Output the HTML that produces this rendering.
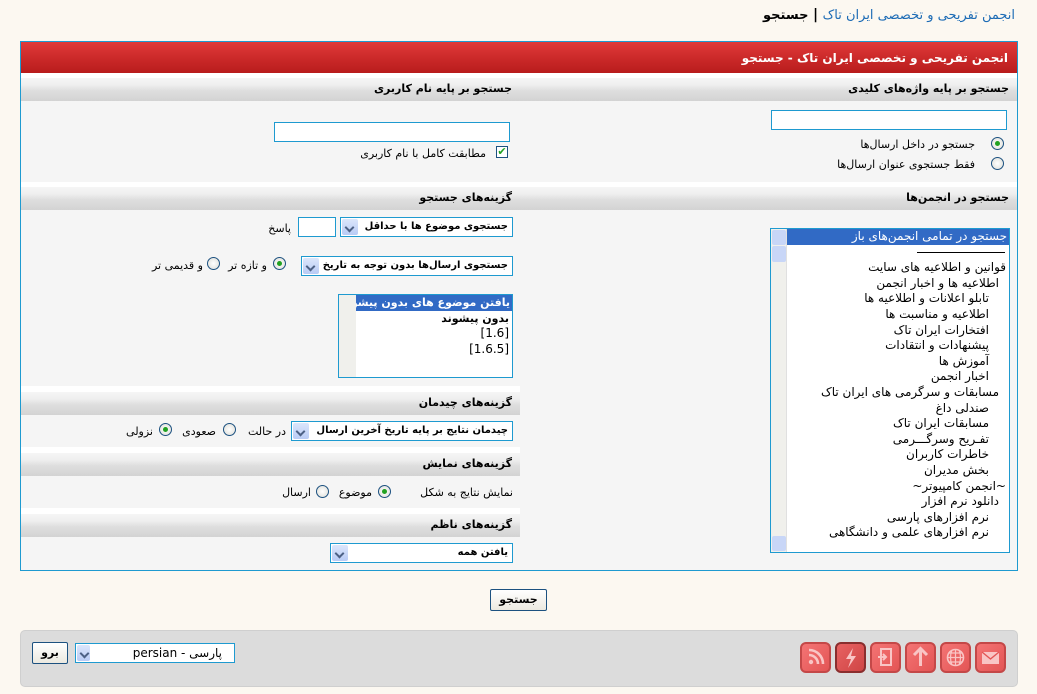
<!DOCTYPE html>
<html><head><meta charset="utf-8">
<style>
*{margin:0;padding:0;box-sizing:border-box}
body{width:1037px;height:694px;background:#fcf8f1;font-family:"DejaVu Sans",sans-serif;font-size:11px;color:#000;position:relative;overflow:hidden;direction:rtl}
.a{position:absolute}
.t{white-space:nowrap}
.hd{position:absolute;height:23px;background:linear-gradient(#f6f6f6 0%,#efefef 30%,#dedede 55%,#d3d3d3 100%);font-weight:bold;font-size:11px;line-height:21px;padding-right:8px}
.inp{position:absolute;background:#fff;border:1px solid #1e9ad0}
.sel{position:absolute;background:#fff;border:1px solid #1e9ad0;font-weight:bold;font-size:10px;line-height:18px;padding-right:4px;white-space:nowrap;overflow:hidden}
.dd{position:absolute;left:1px;top:1px;bottom:1px;width:16px;background:linear-gradient(#dbe6fb,#b9cbf5);border-radius:2px}
.dd:after{content:"";position:absolute;left:4px;top:5px;width:5px;height:5px;border-right:2px solid #4d6185;border-bottom:2px solid #4d6185;transform:rotate(45deg)}
.rad{position:absolute;width:13px;height:13px;border-radius:50%;border:1px solid #1c5180;background:radial-gradient(#fff,#dcdcd6)}
.rad.on:after{content:"";position:absolute;left:3px;top:3px;width:5px;height:5px;border-radius:50%;background:#21a121}
.ic{position:absolute;top:642px;width:31px;height:31px;border-radius:6px;background:linear-gradient(135deg,#f47474,#e35555);border:2px solid #c44848}
.lst div{height:15.6px;line-height:15.6px;white-space:nowrap;font-size:12px}
</style></head><body>

<div class="a t" style="right:22px;top:7px;font-size:13px;font-weight:bold"><span style="color:#1c6bb5;font-weight:normal">انجمن تفریحی و تخصصی ایران تاک</span> <span style="font-size:14px">|</span> جستجو</div>

<div class="a" style="left:20px;top:41px;width:998px;height:530px;border:1px solid #1e9ad0;background:#f5f5f5"></div>
<div class="a" style="left:21px;top:42px;width:996px;height:31px;background:linear-gradient(#e03a3a,#cc2a2a 50%,#b81c1c);color:#fff;font-weight:bold;font-size:12px;line-height:32px;padding-right:9px;text-align:right">انجمن تفریحی و تخصصی ایران تاک - جستجو</div>
<div class="a" style="left:21px;top:73px;width:996px;height:5px;background:#fff"></div>

<div class="hd" style="left:520px;top:78px;width:497px">جستجو بر پایه واژه‌های کلیدی</div>
<div class="hd" style="left:21px;top:78px;width:499px">جستجو بر پایه نام کاربری</div>

<div class="inp" style="left:771px;top:110px;width:236px;height:20px"></div>
<div class="rad on" style="left:991px;top:137px"></div>
<div class="a t" style="right:62px;top:138px">جستجو در داخل ارسال‌ها</div>
<div class="rad" style="left:991px;top:157px"></div>
<div class="a t" style="right:62px;top:158px">فقط جستجوی عنوان ارسال‌ها</div>

<div class="inp" style="left:274px;top:122px;width:236px;height:20px"></div>
<div class="a" style="left:496px;top:146px;width:12px;height:12px;border:1px solid #1c5180;background:#fff;color:#21a121;font-size:11px;line-height:10px;text-align:center;font-weight:bold">✔</div>
<div class="a t" style="right:551px;top:147px">مطابقت کامل با نام کاربری</div>

<div class="a" style="left:21px;top:182px;width:996px;height:5px;background:#fff"></div>
<div class="hd" style="left:520px;top:187px;width:497px">جستجو در انجمن‌ها</div>
<div class="hd" style="left:21px;top:187px;width:499px">گزینه‌های جستجو</div>

<div class="a lst" style="left:770px;top:228px;width:240px;height:325px;border:1px solid #1e9ad0;background:#fff;overflow:hidden;padding-right:0;text-align:right">
<div style="background:#316ac5;color:#fff;padding-right:2px;margin-left:16px">جستجو در تمامی انجمن‌های باز</div>
<div style="padding-right:4px"><span style="display:inline-block;width:88px;border-top:1px solid #000;vertical-align:middle"></span></div>
<div style="padding-right:3px">قوانین و اطلاعیه های سایت</div>
<div style="padding-right:10px">اطلاعیه ها و اخبار انجمن</div>
<div style="padding-right:20px">تابلو اعلانات و اطلاعیه ها</div>
<div style="padding-right:20px">اطلاعیه و مناسبت ها</div>
<div style="padding-right:20px">افتخارات ایران تاک</div>
<div style="padding-right:20px">پیشنهادات و انتقادات</div>
<div style="padding-right:20px">آموزش ها</div>
<div style="padding-right:20px">اخبار انجمن</div>
<div style="padding-right:10px">مسابقات و سرگرمی های ایران تاک</div>
<div style="padding-right:20px">صندلی داغ</div>
<div style="padding-right:20px">مسابقات ایران تاک</div>
<div style="padding-right:20px">تفـریح وسرگـــرمی</div>
<div style="padding-right:20px">خاطرات کاربران</div>
<div style="padding-right:20px">بخش مدیران</div>
<div style="padding-right:3px">~انجمن کامپیوتر~</div>
<div style="padding-right:10px">دانلود نرم افزار</div>
<div style="padding-right:20px">نرم افزارهای پارسی</div>
<div style="padding-right:20px">نرم افزارهای علمی و دانشگاهی</div>
<div class="a" style="left:0;top:0;width:16px;height:323px;background:#f0f0ec;border-right:1px solid #e0e0e0"></div>
<div class="a" style="left:1px;top:1px;width:14px;height:15px;background:#c8d6f7;border-radius:2px"></div>
<div class="a" style="left:1px;top:17px;width:14px;height:16px;background:#c8d6f7;border-radius:2px"></div>
<div class="a" style="left:1px;bottom:1px;width:14px;height:15px;background:#c8d6f7;border-radius:2px"></div>
</div>

<div class="sel" style="left:340px;top:217px;width:173px;height:20px">جستجوی موضوع ها با حداقل<div class="dd"></div></div>
<div class="inp" style="left:298px;top:217px;width:38px;height:20px"></div>
<div class="a t" style="right:746px;top:222px">پاسخ</div>

<div class="sel" style="left:301px;top:256px;width:212px;height:20px">جستجوی ارسال‌ها بدون توجه به تاریخ<div class="dd"></div></div>
<div class="rad on" style="left:273px;top:257px"></div>
<div class="a t" style="right:770px;top:259px">و تازه تر</div>
<div class="rad" style="left:207px;top:257px"></div>
<div class="a t" style="right:834px;top:259px">و قدیمی تر</div>

<div class="a lst" style="left:338px;top:294px;width:175px;height:84px;border:1px solid #1e9ad0;background:#fff;overflow:hidden;text-align:right">
<div style="background:#316ac5;color:#fff;margin-left:17px;padding-right:2px;font-size:11px;font-weight:bold">یافتن موضوع های بدون پیشوند</div>
<div style="padding-right:3px;font-weight:bold;font-size:11px">بدون پیشوند</div>
<div style="padding-right:3px">[1.6]</div>
<div style="padding-right:3px">[1.6.5]</div>
<div class="a" style="left:0;top:0;width:17px;height:82px;background:#f0f0ec"></div>
</div>

<div class="a" style="left:21px;top:386px;width:499px;height:6px;background:#fff"></div>
<div class="hd" style="left:21px;top:392px;width:499px">گزینه‌های چیدمان</div>
<div class="sel" style="left:291px;top:421px;width:222px;height:20px">چیدمان نتایج بر پایه تاریخ آخرین ارسال<div class="dd"></div></div>
<div class="a t" style="right:751px;top:425px">در حالت</div>
<div class="rad" style="left:223px;top:423px"></div>
<div class="a t" style="right:821px;top:425px">صعودی</div>
<div class="rad on" style="left:159px;top:423px"></div>
<div class="a t" style="right:884px;top:425px">نزولی</div>

<div class="a" style="left:21px;top:447px;width:499px;height:6px;background:#fff"></div>
<div class="hd" style="left:21px;top:453px;width:499px">گزینه‌های نمایش</div>
<div class="a t" style="right:524px;top:486px">نمایش نتایج به شکل</div>
<div class="rad on" style="left:378px;top:485px"></div>
<div class="a t" style="right:665px;top:486px">موضوع</div>
<div class="rad" style="left:316px;top:485px"></div>
<div class="a t" style="right:726px;top:486px">ارسال</div>

<div class="a" style="left:21px;top:508px;width:499px;height:6px;background:#fff"></div>
<div class="hd" style="left:21px;top:514px;width:499px">گزینه‌های ناظم</div>
<div class="sel" style="left:330px;top:543px;width:183px;height:20px">یافتن همه<div class="dd"></div></div>

<div class="a" style="left:490px;top:589px;width:57px;height:22px;border:1px solid #1c5180;border-radius:2px;background:linear-gradient(#fff,#ece9e0);font-weight:bold;text-align:center;line-height:19px">جستجو</div>

<div class="a" style="left:20px;top:630px;width:998px;height:57px;background:#dcdcdc;border:1px solid #cfcfcf;border-radius:5px"></div>
<div class="a" style="left:32px;top:642px;width:36px;height:22px;border:1px solid #1c5180;border-radius:2px;background:linear-gradient(#fff,#ece9e0);font-weight:bold;text-align:center;line-height:19px">برو</div>
<div class="sel" style="left:75px;top:643px;width:160px;height:20px;font-weight:normal;text-align:right;padding-right:12px;font-size:12px">پارسی - persian<div class="dd" style="width:13px"></div></div>

<div class="ic" style="left:800px"><svg width="27" height="27" viewBox="0 0 27 27"><circle cx="9" cy="18" r="2.2" fill="#f9c5c5"/><path d="M7 11a9 9 0 0 1 9 9M7 6a14 14 0 0 1 14 14" stroke="#f9c5c5" stroke-width="2.6" fill="none"/></svg></div>
<div class="ic" style="left:835px;background:linear-gradient(135deg,#e86262,#cf4545);border-color:#8a2e2e"><svg width="27" height="27" viewBox="0 0 27 27"><path d="M16 4L9 15h5l-3 9 8-12h-5z" fill="#f9c5c5"/></svg></div>
<div class="ic" style="left:870px"><svg width="27" height="27" viewBox="0 0 27 27"><rect x="9" y="5" width="10" height="16" stroke="#f9c5c5" stroke-width="2" fill="none"/><path d="M6 13h7M11 10l3 3-3 3" stroke="#f9c5c5" stroke-width="2" fill="none"/></svg></div>
<div class="ic" style="left:905px"><svg width="27" height="27" viewBox="0 0 27 27"><path d="M13.5 5v17M7 11l6.5-6.5L20 11" stroke="#f9c5c5" stroke-width="3" fill="none"/></svg></div>
<div class="ic" style="left:940px"><svg width="27" height="27" viewBox="0 0 27 27"><circle cx="13.5" cy="13.5" r="8" stroke="#f9c5c5" stroke-width="1.6" fill="none"/><path d="M5.5 13.5h16M13.5 5.5v16M7 9h13M7 18h13M10 6c-2 5-2 10 0 15M17 6c2 5 2 10 0 15" stroke="#f9c5c5" stroke-width="1.2" fill="none"/></svg></div>
<div class="ic" style="left:975px"><svg width="27" height="27" viewBox="0 0 27 27"><rect x="5" y="8" width="17" height="12" fill="#f9c5c5"/><path d="M5 8l8.5 7 8.5-7" stroke="#e35555" stroke-width="1.4" fill="none"/></svg></div>

</body></html>
